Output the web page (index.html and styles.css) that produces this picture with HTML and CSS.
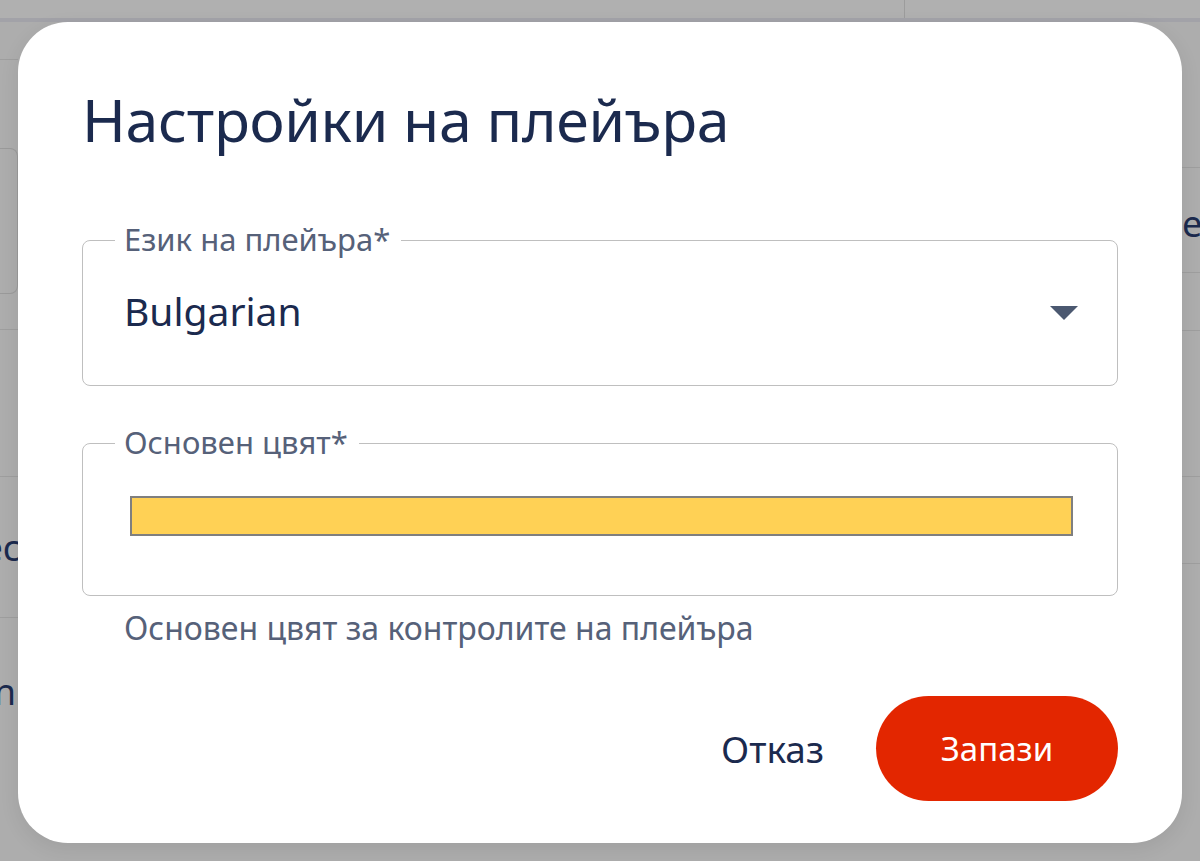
FILE: index.html
```html
<!DOCTYPE html>
<html lang="bg">
<head>
  <meta charset="UTF-8">
  <meta name="viewport" content="width=device-width, initial-scale=1.0">
  <title>Настройки на плейъра</title>
  <link rel="stylesheet" href="styles.css">
</head>
<body>
  <div class="page">
    <div class="topbar">
      <div class="topbar-main"></div>
      <div class="topbar-side"></div>
    </div>
    <div class="columns">
      <div class="col col-left">
        <div class="row row-a"></div>
        <div class="row row-b"><div class="card"></div></div>
        <div class="row row-c"></div>
        <div class="row row-d"><span>ec</span></div>
        <div class="row row-e"><span>n</span></div>
      </div>
      <div class="col col-right">
        <div class="row row-r1"></div>
        <div class="row row-r2"><span>e</span></div>
        <div class="row row-r3"></div>
        <div class="row row-r4"></div>
        <div class="row row-r5"></div>
      </div>
    </div>
  </div>

  <div class="dialog" role="dialog">
    <h2 class="dialog-title">Настройки на плейъра</h2>

    <div class="field">
      <fieldset class="outline">
        <legend>Език на плейъра*</legend>
      </fieldset>
      <label class="field-label">Език на плейъра*</label>
      <div class="select">
        <span>Bulgarian</span>
        <svg class="arrow" width="28" height="14" viewBox="0 0 28 14"><path d="M0 0h28L14 14z" fill="#4b5870"/></svg>
      </div>
    </div>

    <div class="field field-color">
      <fieldset class="outline">
        <legend>Основен цвят*</legend>
      </fieldset>
      <label class="field-label">Основен цвят*</label>
      <div class="swatch"></div>
    </div>
    <p class="helper">Основен цвят за контролите на плейъра</p>

    <div class="actions">
      <button class="btn btn-text" type="button">Отказ</button>
      <button class="btn btn-save" type="button">Запази</button>
    </div>
  </div>
</body>
</html>
```

FILE: styles.css
```css
body {
  margin: 0;
  background-color: #adadad;
  font-family: "Noto Sans", "Open Sans", sans-serif;
  color: #1b2a4e;
  overflow: hidden;
}

/* page behind the dialog */
.page {
  height: 861px;
}
.topbar {
  display: flex;
  height: 18px;
  background-color: #b0b0b0;
  border-bottom: 4px solid #a2a2a8;
}
.topbar-main {
  width: 904px;
  border-right: 1px solid #9c9c9c;
}
.columns {
  display: flex;
  justify-content: space-between;
}
.col-left {
  width: 18px;
  overflow: hidden;
}
.col-right {
  width: 18px;
  overflow: hidden;
}
.row {
  border-bottom: 1px solid #9e9e9e;
  position: relative;
}
.row span {
  position: absolute;
  font-size: 36px;
  line-height: 48px;
  color: #1b2a4e;
}
.row-a { height: 37px; }
.row-b {
  height: 270px;
  padding-top: 88px;
  box-sizing: border-box;
}
.row-b .card {
  height: 144px;
  width: 17px;
  border: 1px solid #9a9a9a;
  border-left: none;
  border-radius: 0 8px 8px 0;
}
.row-c { height: 146px; }
.row-d { height: 140px; }
.row-d span { right: -2px; top: 47px; }
.row-e { height: 140px; border: none; }
.row-e span { right: 2px; top: 50px; }

.row-r1 { height: 145px; }
.row-r2 { height: 104px; }
.row-r2 span { left: 0; top: 32px; }
.row-r3 { height: 57px; }
.row-r4 { height: 145px; }
.row-r5 { height: 86px; }

/* dialog */
.dialog {
  position: absolute;
  left: 18px;
  top: 22px;
  width: 1164px;
  height: 821px;
  box-sizing: border-box;
  background: #fff;
  border-radius: 50px;
  padding: 53px 64px 0 64px;
  box-shadow: 0 6px 20px rgba(0, 0, 0, 0.08);
}
.dialog-title {
  margin: 0;
  font-weight: 400;
  font-size: 59px;
  letter-spacing: -0.3px;
  line-height: 88px;
  color: #1b2a4e;
}
.field {
  position: relative;
  height: 146px;
  margin-top: 77px;
}
.field-color {
  height: 153px;
  margin-top: 57px;
}
.outline {
  position: absolute;
  inset: -18px 0 0 0;
  margin: 0;
  padding: 0 32px;
  border: 1.5px solid #bfbfbf;
  border-radius: 8px;
}
.outline legend {
  visibility: hidden;
  font-size: 31px;
  padding: 0 10px;
  height: 36px;
}
.field-label {
  position: absolute;
  left: 42px;
  top: -20px;
  font-size: 31px;
  line-height: 38px;
  color: #566179;
}
.select {
  display: flex;
  align-items: center;
  justify-content: space-between;
  height: 146px;
  padding: 0 40px 0 42px;
  font-size: 39px;
  color: #1b2a4e;
}
.select span {
  margin-top: -5px;
}
.swatch {
  position: absolute;
  left: 48px;
  right: 45px;
  top: 53px;
  height: 36px;
  background: #ffd155;
  border: 2px solid #7f7f7f;
}
.helper {
  margin: 12px 0 0 42px;
  font-size: 32px;
  line-height: 40px;
  color: #566179;
}
.actions {
  display: flex;
  justify-content: flex-end;
  align-items: center;
  gap: 52px;
  margin-top: 48px;
}
.btn {
  font-family: inherit;
  border: none;
  cursor: pointer;
}
.btn-text {
  background: none;
  color: #1b2a4e;
  font-size: 37px;
  padding: 0;
}
.btn-save {
  width: 242px;
  height: 105px;
  border-radius: 53px;
  background: #e32600;
  color: #fff;
  font-size: 33px;
}
```
